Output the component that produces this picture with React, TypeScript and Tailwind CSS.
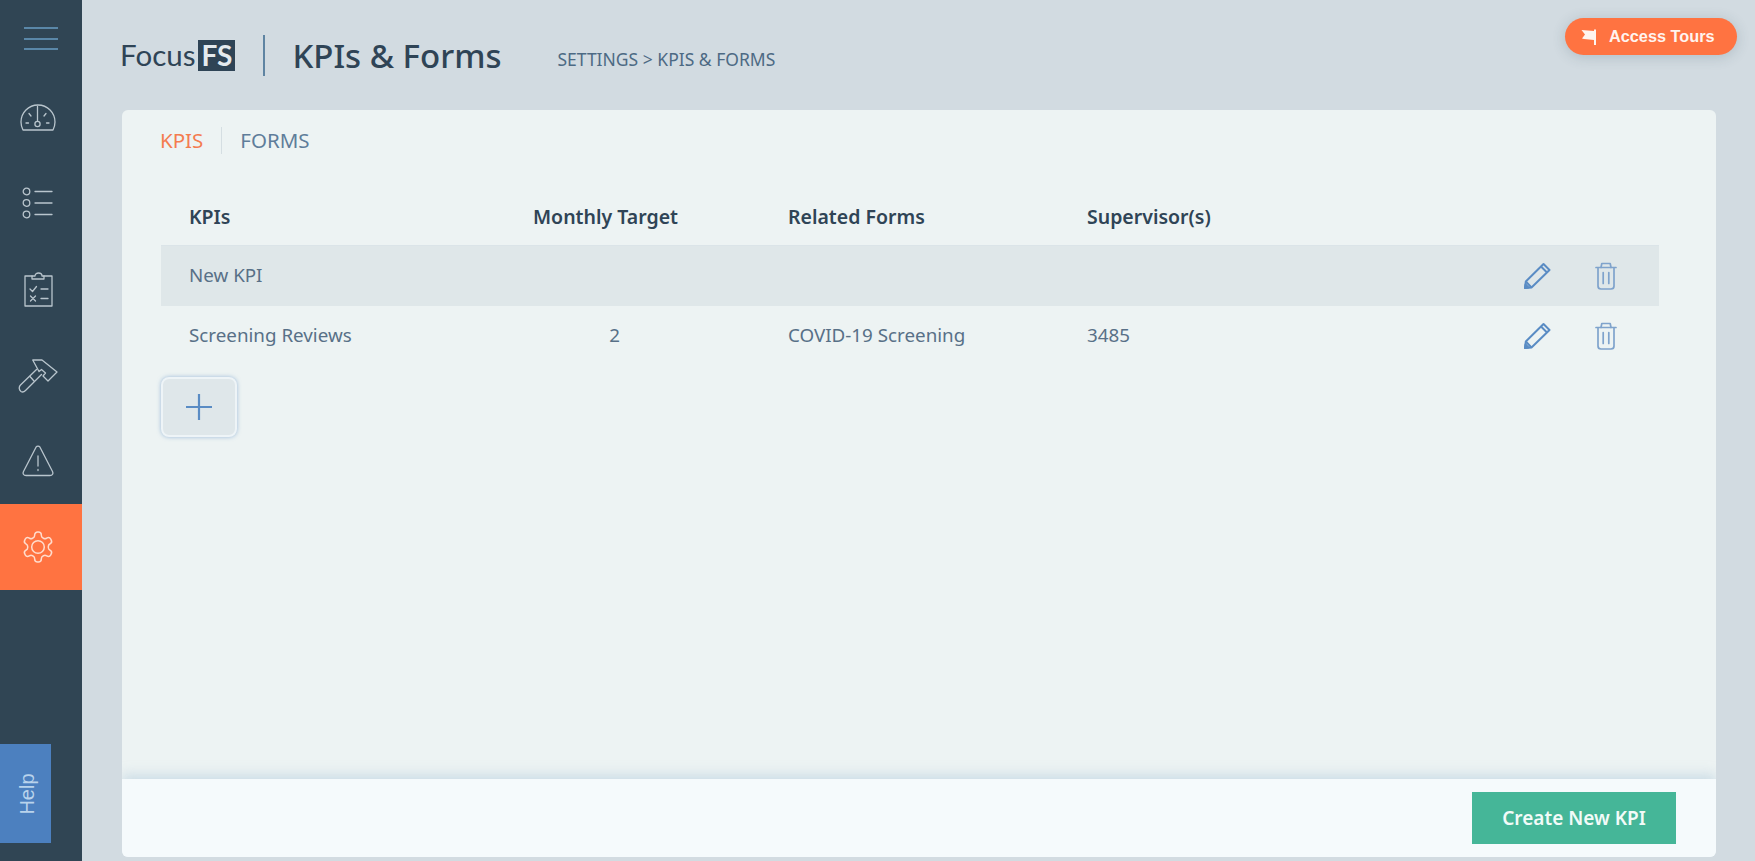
import React from 'react';

const sans = { fontFamily: '"Noto Sans", sans-serif' };

const GaugeIcon = () => (
  <svg width="36" height="28" viewBox="0 0 36 28" fill="none" stroke="#b9c5cd" strokeWidth="1.3" strokeLinecap="round" strokeLinejoin="round">
    <path d="M3 27 C1.5 24 1 22 1 19 C1 9.5 8.5 2 18 2 C27.5 2 35 9.5 35 19 C35 22 34.5 24 33 27 Z" />
    <circle cx="17.5" cy="21" r="2.6" />
    <path d="M17.5 18.4 V3.5 M9 10.5 L11 13 M26 10.5 L24 13 M6 20 H8.5 M26.5 20 H29" />
  </svg>
);

const ListIcon = () => (
  <svg width="32" height="32" viewBox="0 0 32 32" fill="none" stroke="#b9c5cd" strokeWidth="1.3" strokeLinecap="round">
    <circle cx="4.5" cy="4.5" r="3.3" />
    <circle cx="4.5" cy="16" r="3.3" />
    <circle cx="4.5" cy="27.5" r="3.3" />
    <path d="M13 4.5 H30 M13 16 H30 M13 27.5 H30" />
  </svg>
);

const ClipboardIcon = () => (
  <svg width="30" height="36" viewBox="0 0 30 36" fill="none" stroke="#b9c5cd" strokeWidth="1.3" strokeLinecap="round" strokeLinejoin="round">
    <path d="M9 5 H2 V35 H29 V5 H21" />
    <path d="M9 8 V5 H12 C12 1 19 1 19 5 H21 V8 Z" />
    <path d="M7 18 L9.5 20.5 L13.5 15.5 M18 18 H25 M7.5 25 L12.5 30 M12.5 25 L7.5 30 M18 27.5 H25" />
  </svg>
);

const HammerIcon = () => (
  <svg width="40" height="36" viewBox="0 0 40 36" fill="none" stroke="#b9c5cd" strokeWidth="1.3" strokeLinecap="round" strokeLinejoin="round">
    <path d="M14.7 3 H24 L39 15 L30 24 L25 19 L27.5 16 L23.5 12.5 L21 14.5 Z" />
    <path d="M18.5 12.5 L2.5 28 C0.5 30 1 33 3 34.5 C4.5 35.5 6 35 7.5 33.5 L23.5 17.5" />
    <path d="M12 19.5 L16 24" />
  </svg>
);

const WarningIcon = () => (
  <svg width="32" height="32" viewBox="0 0 32 32" fill="none" stroke="#b9c5cd" strokeWidth="1.3" strokeLinecap="round" strokeLinejoin="round">
    <path d="M14 2.2 C15 0.8 17 0.8 18 2.2 L30.5 26.5 C31.5 28.5 30.5 30.5 28 30.5 H4 C1.5 30.5 0.5 28.5 1.5 26.5 Z" />
    <path d="M16 11 V21 M16 24.5 V25.5" />
  </svg>
);

const GearIcon = () => (
  <svg width="36" height="36" viewBox="0 0 24 24" fill="none" stroke="#ffdccd" strokeWidth="1" strokeLinecap="round" strokeLinejoin="round">
    <path d="M12.22 2h-.44a2 2 0 0 0-2 2v.18a2 2 0 0 1-1 1.73l-.43.25a2 2 0 0 1-2 0l-.15-.08a2 2 0 0 0-2.73.73l-.22.38a2 2 0 0 0 .73 2.73l.15.1a2 2 0 0 1 1 1.72v.51a2 2 0 0 1-1 1.74l-.15.09a2 2 0 0 0-.73 2.73l.22.38a2 2 0 0 0 2.73.73l.15-.08a2 2 0 0 1 2 0l.43.25a2 2 0 0 1 1 1.73V20a2 2 0 0 0 2 2h.44a2 2 0 0 0 2-2v-.18a2 2 0 0 1 1-1.73l.43-.25a2 2 0 0 1 2 0l.15.08a2 2 0 0 0 2.73-.73l.22-.39a2 2 0 0 0-.73-2.73l-.15-.08a2 2 0 0 1-1-1.74v-.5a2 2 0 0 1 1-1.74l.15-.09a2 2 0 0 0 .73-2.73l-.22-.38a2 2 0 0 0-2.73-.73l-.15.08a2 2 0 0 1-2 0l-.43-.25a2 2 0 0 1-1-1.73V4a2 2 0 0 0-2-2z" />
    <circle cx="12" cy="12" r="4.2" />
  </svg>
);

const PencilIcon = () => (
  <svg width="28" height="28" viewBox="0 0 28 28" fill="none" stroke="#5a8cc4" strokeWidth="2" strokeLinejoin="round">
    <path d="M2 26 L2.8 19.5 L20.5 2 L26.5 8 L8.5 25.5 Z" />
    <path d="M18 4.5 L24 10.5 M2.8 19.5 L8.5 25.5" />
    <path d="M2 26 L2.5 22.5 L5.5 25.5 Z" fill="#5a8cc4" />
  </svg>
);

const TrashIcon = () => (
  <svg width="22" height="28" viewBox="0 0 22 28" fill="none" stroke="#7fa3cc" strokeWidth="1.7" strokeLinecap="round" strokeLinejoin="round">
    <path d="M1 5.5 H21 M3 5.5 V24 C3 26 4 27 6 27 H16 C18 27 19 26 19 24 V5.5" />
    <path d="M6 5.5 L6.8 1.5 H15.2 L16 5.5 M8.2 10.5 V21.5 M13.8 10.5 V21.5" />
  </svg>
);

const navItems = [
  { key: 'gauge', icon: <GaugeIcon /> },
  { key: 'list', icon: <ListIcon /> },
  { key: 'clipboard', icon: <ClipboardIcon /> },
  { key: 'hammer', icon: <HammerIcon /> },
  { key: 'warning', icon: <WarningIcon /> },
  { key: 'settings', icon: <GearIcon />, active: true },
];

const rows = [
  { name: 'New KPI', target: '', forms: '', supervisor: '', shaded: true },
  { name: 'Screening Reviews', target: '2', forms: 'COVID-19 Screening', supervisor: '3485', shaded: false },
];

const App: React.FC = () => {
  return (
    <div className="flex h-screen overflow-hidden bg-[#d2dbe1]" style={sans}>
      {/* Sidebar */}
      <aside className="flex w-[82px] shrink-0 flex-col bg-[#304554]">
        <div className="flex h-[74px] flex-col gap-[8.5px] pl-[24px] pt-[27px]">
          <div className="h-[2px] w-[34px] bg-[#5a87a8]" />
          <div className="h-[2px] w-[34px] bg-[#5a87a8]" />
          <div className="h-[2px] w-[34px] bg-[#5a87a8]" />
        </div>
        {navItems.map((item) => (
          <div
            key={item.key}
            className={`flex h-[86px] items-center pr-[6px] justify-center ${item.active ? 'bg-[#ff7341]' : ''}`}
          >
            {item.icon}
          </div>
        ))}
        <div className="mt-auto mb-[18px] flex h-[99px] w-[51px] items-center justify-center bg-[#4c80bf] pl-[3px]">
          <span
            className="-rotate-90 text-[20px] text-[#b9d3ec]"
            style={{ fontFamily: '"Liberation Sans", sans-serif' }}
          >
            Help
          </span>
        </div>
      </aside>

      <main className="flex min-w-0 flex-1 flex-col pl-[40px] pr-[39px] pb-[4px]">
        {/* Header */}
        <header className="relative flex h-[110px] shrink-0 items-center">
          <div className="-ml-[2px] flex items-center">
            <span className="text-[29.5px] leading-none text-[#2f4456]" style={{ fontFamily: 'Lato, sans-serif' }}>
              Focus
            </span>
            <span
              className="ml-[3px] flex h-[31px] w-[37px] items-center justify-center bg-[#2f4456] text-[28px] font-bold leading-none text-[#e4eaee]"
              style={{ fontFamily: 'Lato, sans-serif' }}
            >
              FS
            </span>
          </div>
          <div className="ml-[28px] h-[41px] w-[2px] bg-[#5f84a2]" />
          <h1 className="ml-[27px] text-[33px] font-medium leading-none text-[#2f4456]">KPIs &amp; Forms</h1>
          <div className="ml-[56px] mt-[9px] text-[17.5px] text-[#4d6a84]">SETTINGS &gt; KPIS &amp; FORMS</div>
          <button
            className="absolute right-[-21px] top-[18px] flex h-[37px] w-[172px] items-center rounded-full bg-[#ff7341] pl-[16px] text-[16.3px] font-bold text-[#fff4ef] shadow-[0_2px_14px_rgba(47,68,86,0.2)]"
            style={{ fontFamily: '"Liberation Sans", sans-serif' }}
          >
            <svg width="16" height="16" viewBox="0 0 16 16" fill="#fff4ef">
              <path d="M0.5 1 L13 2 L13 0.5 L15 0.5 L15 16 L13 16 L13 11 L3 10 L1 9.5 L4 5.5 Z" />
            </svg>
            <span className="ml-[12px]">Access Tours</span>
          </button>
        </header>

        {/* Card */}
        <section className="flex min-h-0 flex-1 flex-col overflow-hidden rounded-[6px] bg-[#edf3f3]">
          <div className="flex-1 px-[39px] pt-[17px]">
            <div className="-ml-[1px] flex items-center text-[20.5px] leading-[27px]">
              <span className="text-[#f47c50]">KPIS</span>
              <span className="mx-[18px] h-[27px] w-px bg-[#d5dee2]" />
              <span className="text-[#5f7d9a]">FORMS</span>
            </div>

            <div className="mt-[38px] w-[1498px]">
              <div className="grid h-[54px] grid-cols-[372px_255px_299px_1fr] items-center border-b border-[#dbe4e8] pb-[4px] text-[19.5px] font-semibold text-[#2f4456]">
                <div className="pl-[28px]">KPIs</div>
                <div>Monthly Target</div>
                <div>Related Forms</div>
                <div>Supervisor(s)</div>
              </div>

              {rows.map((row) => (
                <div
                  key={row.name}
                  className={`grid h-[60px] grid-cols-[372px_255px_299px_1fr] items-center text-[18.8px] text-[#587087] ${row.shaded ? 'bg-[#dfe7e9]' : ''}`}
                >
                  <div className="pb-[2px] pl-[28px]">{row.name}</div>
                  <div className="w-[163px] pb-[2px] text-center">{row.target}</div>
                  <div className="pb-[2px]">{row.forms}</div>
                  <div className="flex items-center justify-between pr-[42px]">
                    <span className="pb-[2px]">{row.supervisor}</span>
                    <span className="flex items-center gap-[44px]">
                      <PencilIcon />
                      <TrashIcon />
                    </span>
                  </div>
                </div>
              ))}

              <button className="mt-[11px] flex h-[60px] w-[76px] items-center justify-center rounded-[8px] border-2 border-[#eef4f7] bg-[#dfe7ea] shadow-[0_0_4px_rgba(90,140,196,0.55)]">
                <svg width="28" height="28" viewBox="0 0 28 28" stroke="#5a8cc4" strokeWidth="2.2">
                  <path d="M14 1 V27 M1 14 H27" />
                </svg>
              </button>
            </div>
          </div>

          {/* Footer */}
          <div className="flex h-[78px] shrink-0 items-center justify-end bg-[#f5fafc] pr-[40px] shadow-[0_-4px_12px_rgba(150,185,210,0.4)]">
            <button className="h-[52px] w-[204px] bg-[#45b698] text-[19px] font-semibold text-[#f2fbf8]">
              Create New KPI
            </button>
          </div>
        </section>
      </main>
    </div>
  );
};

export default App;
